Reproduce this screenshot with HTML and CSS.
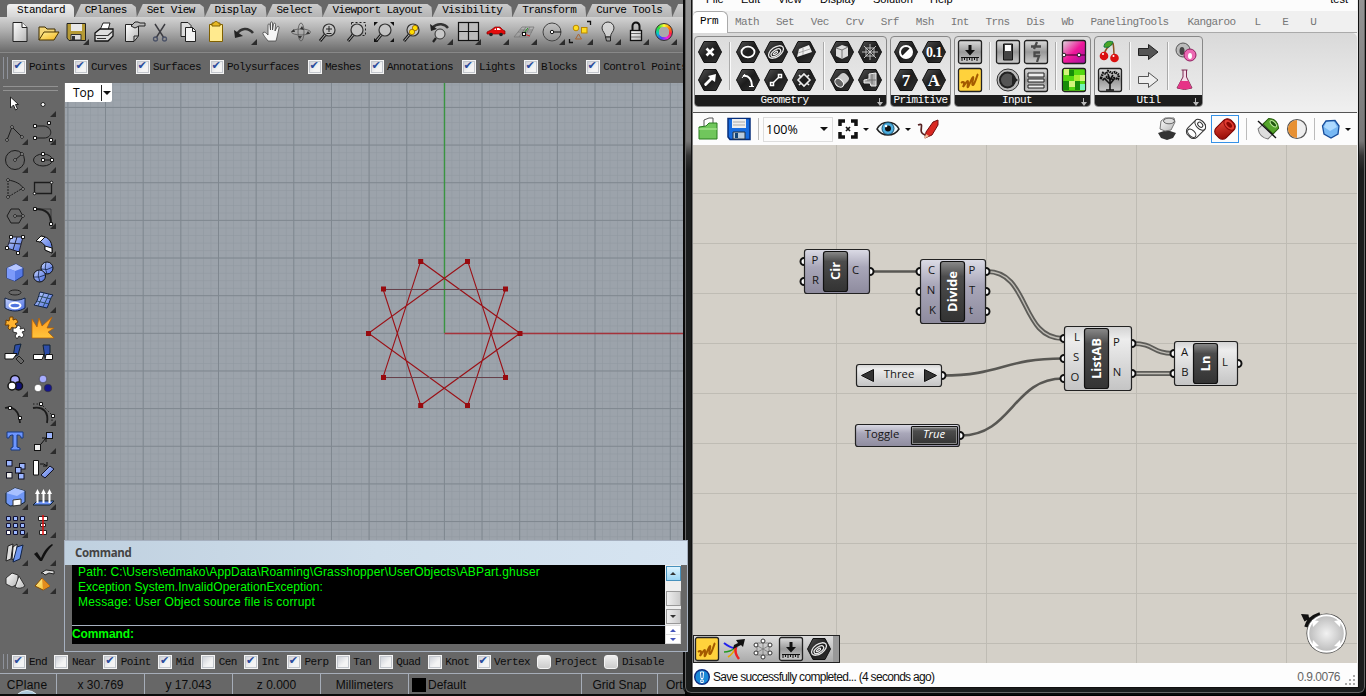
FILE: index.html
```html
<!DOCTYPE html>
<html lang="en">
<head>
<meta charset="utf-8">
<title>Modeler and graph editor</title>
<link rel="stylesheet" href="styles.css">
</head>
<body>
<svg class="defs" aria-hidden="true">
  <defs>
    <linearGradient id="gHex" x1="0" y1="0" x2="1" y2="1"><stop offset="0" stop-color="#555"/><stop offset=".5" stop-color="#1c1c1c"/><stop offset="1" stop-color="#333"/></linearGradient>
    <linearGradient id="gTile" x1="0" y1="0" x2="0" y2="1"><stop offset="0" stop-color="#ddd"/><stop offset=".5" stop-color="#999"/><stop offset="1" stop-color="#ccc"/></linearGradient>
    <linearGradient id="gBlue" x1="0" y1="0" x2="1" y2="1"><stop offset="0" stop-color="#c6d4ff"/><stop offset="1" stop-color="#4468dd"/></linearGradient>
    <linearGradient id="gMag" x1="0" y1="0" x2="1" y2="1"><stop offset="0" stop-color="#ddd"/><stop offset=".5" stop-color="#f0189a"/><stop offset="1" stop-color="#a010a0"/></linearGradient>
    <linearGradient id="gGold" x1="0" y1="0" x2="1" y2="1"><stop offset="0" stop-color="#fff09a"/><stop offset="1" stop-color="#f2b51c"/></linearGradient>
    <linearGradient id="gFire" x1="0" y1="0" x2="0" y2="1"><stop offset="0" stop-color="#ff9a1c"/><stop offset="1" stop-color="#ffc53d"/></linearGradient>
    <linearGradient id="gWhite" x1="0" y1="0" x2="1" y2="1"><stop offset="0" stop-color="#fff"/><stop offset="1" stop-color="#b5b5b5"/></linearGradient>
    <linearGradient id="gRed" x1="0" y1="0" x2="1" y2="1"><stop offset="0" stop-color="#f05040"/><stop offset="1" stop-color="#8e0500"/></linearGradient>
    <linearGradient id="gPurple" x1="0" y1="0" x2="0" y2="1"><stop offset="0" stop-color="#dcdce6"/><stop offset=".4" stop-color="#a9a7b9"/><stop offset="1" stop-color="#8e8b9e"/></linearGradient>
    <linearGradient id="gLight" x1="0" y1="0" x2="0" y2="1"><stop offset="0" stop-color="#d2d2d2"/><stop offset=".2" stop-color="#ededed"/><stop offset="1" stop-color="#c4c4c4"/></linearGradient>
    <linearGradient id="gDark" x1="0" y1="0" x2="0" y2="1"><stop offset="0" stop-color="#8a8a8a"/><stop offset=".25" stop-color="#4c4c4c"/><stop offset="1" stop-color="#333"/></linearGradient>
    <radialGradient id="gKnob"><stop offset="0" stop-color="#f2f2f2"/><stop offset="1" stop-color="#bcbcbc"/></radialGradient>
    <pattern id="minor" width="7.53" height="7.53" patternUnits="userSpaceOnUse" x="378.9" y="250"><path d="M.5 0V8M0 .5H8" stroke="#8f979f" stroke-width=".6"/></pattern>
    <pattern id="major" width="37.65" height="37.65" patternUnits="userSpaceOnUse" x="378.9" y="249.8"><path d="M.5 0V38M0 .5H38" stroke="#7f878f" stroke-width="1"/></pattern>
    <symbol id="hex" viewBox="0 0 28 28"><path d="M2.5 14 8 3.5H20L25.500 14 20 24.500H8Z" fill="url(#gHex)" stroke="#111" stroke-width="1"/></symbol>
    <symbol id="tile" viewBox="0 0 28 28"><rect x="2.500" y="2.500" width="23" height="23" rx="2" fill="url(#gTile)" stroke="#222" stroke-width="1.300"/></symbol>
    <symbol id="squiggle" viewBox="0 0 28 28"><rect x="2.500" y="2.500" width="23" height="23" rx="2" fill="#ffd23c" stroke="#222" stroke-width="1.300"/><path d="M5 17C8 15 9 16 7 21 10 17 12 13 12 16S11 22 12 21 16 11 17 11 15 20 17 19 21 9 22 8" fill="none" stroke="#a45a00" stroke-width="2"/></symbol>
    <symbol id="stamp" viewBox="0 0 28 28"><use href="#tile"/><path d="M12.500 7H15.500V12H19L14 17.500 9 12H12.500Z" fill="#111"/><path d="M5 19.500H23M6 20V23M8.500 20V22M11 20V23M13.500 20V22M16 20V23M18.500 20V22M21 20V23" stroke="#111" stroke-width="1"/></symbol>
    <symbol id="surfHex" viewBox="0 0 28 28"><use href="#hex"/><g transform="rotate(-35 14 14)" fill="none" stroke="#e8e8e8" stroke-width="1.300"><ellipse cx="14" cy="14" rx="8.500" ry="4.800"/><ellipse cx="13.500" cy="14.500" rx="5.500" ry="2.700"/><ellipse cx="13" cy="14.500" rx="2.500" ry="1"/></g></symbol>
    <symbol id="lens" viewBox="0 0 28 28"><path d="M11 17 6 23" stroke="#1c1c1c" stroke-width="3"/><path d="M11 17 6.500 22.500" stroke="#bbb" stroke-width="1"/><circle cx="15" cy="12" r="6" fill="#c9c9c9" fill-opacity=".8" stroke="#333" stroke-width="1.200"/></symbol>
  </defs>
</svg>

<div class="desktop">
  <main class="rhino">
    <nav class="rtabs"><span class="on">Standard</span><span>CPlanes</span><span>Set View</span><span>Display</span><span>Select</span><span>Viewport Layout</span><span>Visibility</span><span>Transform</span><span>Curve Tools</span><span></span></nav>
    <div class="rbar">
      <i><svg><path d="M7 4.500H16L21 9.500V23.500H7Z" fill="url(#gWhite)" stroke="#222"/><path d="M16 4.500V9.500H21" fill="#fff" stroke="#222"/></svg></i>
      <i><svg><path d="M5 22V9H11L13 11H21V14" fill="#f4d778" stroke="#3a2b00"/><path d="M5 22 10 14H25L20 22Z" fill="url(#gGold)" stroke="#4a3500"/></svg></i>
      <i class="more"><svg><path d="M5 5.500H23.500V22.500H7L5 20Z" fill="#b59a35" stroke="#222"/><path d="M9 6H20V13H9Z" fill="#e8e8e8"/><path d="M9 16.500H19V22H9Z" fill="#ddd" stroke="#333"/><path d="M10 18H13V22H10Z" fill="#333"/></svg></i>
      <i><svg><path d="M10 12 13 5H20L18 12" fill="#fff" stroke="#222"/><path d="M5 15 10 11H23V18L18 23H5Z" fill="#ddd" stroke="#111" stroke-width="1.300"/><path d="M5 17.500H18L23 13M7 20.500H16" stroke="#333" stroke-width="1.200" fill="none"/></svg></i>
      <i><svg><path d="M7.500 6.500H20.500V18L16 23.500H7.500Z" fill="url(#gWhite)" stroke="#222"/><path d="M16 23V18H20" fill="none" stroke="#222"/><path d="M13 8 17 4H20L22 5H27V8H21L17 10Z" fill="#bbb" stroke="#222"/></svg></i>
      <i><svg><path d="M9 6 18 20M19 6 10 20" stroke="#3b3b40" stroke-width="1.400"/><circle cx="9.500" cy="21" r="2" fill="none" stroke="#4c5368" stroke-width="1.300"/><circle cx="18.500" cy="21" r="2" fill="none" stroke="#4c5368" stroke-width="1.300"/></svg></i>
      <i><svg><path d="M7 4.500H14L17 7.500V18.500H7Z" fill="#ddd" stroke="#222"/><path d="M11.500 9.500H18.500L21.500 12.500V23.500H11.500Z" fill="#f3f3f3" stroke="#222"/><path d="M18.500 9.500V13.500H22" fill="none" stroke="#222"/></svg></i>
      <i><svg><path d="M7.500 6.500H20.500V23.500H7.500Z" fill="#ffea8e" stroke="#806000"/><path d="M10 8V5H12C12 3 16 3 16 5H18V8Z" fill="#e7b823" stroke="#806000"/></svg></i>
      <i class="more"><svg><path d="M7 16C11 10 18 9 23 15" fill="none" stroke="#333" stroke-width="2.600"/><path d="M4 12 5 20 13 18Z" fill="#222"/></svg></i>
      <i><svg><path d="M10 23C8 20 4 16 5 14.500 7 13.500 8 15 10 17V7C10 5.500 12 5.500 12 7L12.500 12V5C12.500 3.500 14.500 3.500 14.500 5V12L15.500 6C16 4.500 18 5 17.500 7L17 13 19 9C20 7.500 21.500 8.500 21 10L19 19 18 23Z" fill="#f5f5f5" stroke="#444" stroke-width=".8"/></svg></i>
      <i><svg><g fill="none" stroke="#555" stroke-width=".8"><ellipse cx="15" cy="14" rx="9.500" ry="3"/><ellipse cx="15" cy="14" rx="3" ry="9"/></g><path d="M9 14H5L8 11ZM16 8 18 12 14 11ZM22 13 24 16 20 16ZM12 18H16L14 21Z" fill="#333"/></svg></i>
      <i><svg><use href="#lens"/><path d="M12 11H18M15 8V14M12.500 15.500H17.500" stroke="#222"/></svg></i>
      <i><svg><rect x="9.500" y="4.500" width="14" height="13" fill="none" stroke="#222" stroke-dasharray="2 2"/><use href="#lens"/></svg></i>
      <i><svg><use href="#lens"/><path d="M4 4H8L4 8ZM24 4H20L24 8ZM24 24H20L24 20ZM4 24V20L8 24Z" fill="#111"/></svg></i>
      <i><svg><use href="#lens"/><circle cx="17" cy="10" r="2.700" fill="#fd0" stroke="#850" stroke-width=".7"/><circle cx="14" cy="14" r="2.700" fill="#fd0" stroke="#850" stroke-width=".7"/></svg></i>
      <i class="more"><svg><path d="M6 10C12 4 19 6 22 10" fill="none" stroke="#333" stroke-width="2.400"/><path d="M4 6 5 13 11 11Z" fill="#222"/><path d="M10 20 7 24" stroke="#222" stroke-width="2.200"/><circle cx="14" cy="16" r="5" fill="#c8c8c8" stroke="#333"/></svg></i>
      <i class="more"><svg><rect x="4.500" y="4.500" width="20" height="18" fill="#bcbcbc" stroke="#111" stroke-width="1.200"/><path d="M14.500 5V23M4 13.500H24" stroke="#111" stroke-width="1.200"/></svg></i>
      <i class="more"><svg><path d="M5 16V14L9 12 13 9H18L21 12 23 13V16Z" fill="#e30b0b" stroke="#800" stroke-width=".7"/><path d="M13 11 14 10V12H12ZM15 10H17L19 12H15Z" fill="#fff"/><circle cx="9" cy="16.500" r="1.800" fill="#222"/><circle cx="19" cy="16.500" r="1.800" fill="#222"/></svg></i>
      <i class="more"><svg><path d="M4 19 12 9H24L19 19ZM8 14H22M10 12H23M9 19 16 9M14 19 20 9" fill="none" stroke="#777" stroke-width=".8"/><path d="M14 16 20 18" stroke="#c22"/><path d="M14 15 18 10" stroke="#292"/><rect x="12.500" y="14.500" width="3" height="3" fill="#fff" stroke="#111"/></svg></i>
      <i class="more"><svg><circle cx="14" cy="14" r="9" fill="none" stroke="#444"/><path d="M14 14H23" stroke="#111"/><circle cx="14" cy="14" r="1.700" fill="#fff" stroke="#111"/></svg></i>
      <i class="more"><svg><path d="M21 3.500H24.500V7M3.500 21V24.500H7" fill="none" stroke="#111" stroke-width="1.300"/><circle cx="10" cy="10" r="2.800" fill="#fd2" stroke="#b80"/><rect x="15.500" y="9.500" width="5.500" height="5.500" fill="#fd2" stroke="#b80"/><path d="M9.500 21 12.500 16 15.500 21Z" fill="none" stroke="#a63"/></svg></i>
      <i class="more"><svg><path d="M11.500 19C11.500 15 8 13.500 8 10A6 6 0 0 1 20 10C20 13.500 16.500 15 16.500 19Z" fill="#ddd" fill-opacity=".75" stroke="#333"/><path d="M11.500 19H16.500V23H12.500Z" fill="#999" stroke="#222"/></svg></i>
      <i class="more"><svg><path d="M10.500 13V8A3.500 3.500 0 0 1 17.500 8V13" fill="none" stroke="#111" stroke-width="2"/><rect x="8.500" y="12.500" width="11" height="10" fill="url(#gWhite)" stroke="#111" stroke-width="1.300"/><path d="M9 15.500H19M9 19H19" stroke="#666"/></svg></i>
      <i class="more"><b class="wheel"></b></i>
    </div>
    <div class="filters"><label class="on">Points</label><label class="on">Curves</label><label class="on">Surfaces</label><label class="on">Polysurfaces</label><label class="on">Meshes</label><label class="on">Annotations</label><label class="on">Lights</label><label class="on">Blocks</label><label class="on">Control Points</label></div>
    <div class="work">
      <aside class="tools">
        <i><svg><path d="M9.500 7V18L12.500 15 14.500 20 16.500 19 14.500 14.500H17.500Z" fill="#fff" stroke="#222"/></svg></i>
        <i class="more"><svg><circle cx="14" cy="14.500" r="2" fill="#fff" stroke="#222"/></svg></i>
        <i class="more"><svg class="ln"><path d="M6 22 11 9 21 19"/><g class="d"><circle cx="6" cy="22" r="1.300"/><circle cx="11" cy="9" r="1.300"/><circle cx="21" cy="19" r="1.300"/></g></svg></i>
        <i class="more"><svg class="ln"><path d="M6 8H15C24 9 24 20 15 20H6"/><g class="d"><path d="M4.500 6.500h3v3h-3zM18.500 3.500h3v3h-3zM4.500 18.500h3v3h-3zM20.500 20.500h3v3h-3z"/></g></svg></i>
        <i class="more"><svg class="ln"><circle cx="14" cy="14" r="9.500"/><path d="M14 14 21 8"/><g class="d"><circle cx="14" cy="14" r="1.300"/><circle cx="21" cy="8" r="1.300"/></g></svg></i>
        <i class="more"><svg class="ln"><ellipse cx="14" cy="14" rx="9.500" ry="6"/><path d="M14 14H23"/><g class="d"><path d="M12.500 6.500h3v3h-3zM12.500 12.500h3v3h-3zM21.500 12.500h3v3h-3z"/></g></svg></i>
        <i class="more"><svg class="ln"><path d="M7 6C14 7 20 10 22 14"/><path d="M7 6V23L22 14" stroke-dasharray="2 1"/><g class="d"><circle cx="7" cy="6" r="1.300"/><circle cx="7" cy="23" r="1.300"/><circle cx="22" cy="15" r="1.300"/></g></svg></i>
        <i class="more"><svg class="ln"><path d="M5.500 8.500H22.500V19.500H5.500Z" stroke-width="1.300"/><g class="d"><circle cx="22.500" cy="8.500" r="1.300"/><circle cx="5.500" cy="19.500" r="1.300"/></g></svg></i>
        <i class="more"><svg class="ln"><path d="M6 14 10 7H18L22 14 18 21H10ZM14 14H22"/><g class="d"><circle cx="14" cy="14" r="1.300"/><circle cx="22" cy="14" r="1.300"/></g></svg></i>
        <i class="more"><svg class="ln"><path d="M6 7H22V22" stroke-width=".6"/><path d="M6 7C18 7 22 12 22 22" stroke-width="2"/><g class="d"><path d="M4.500 5.500h3v3h-3zM20.500 20.500h3v3h-3z"/></g></svg></i>
        <i class="more"><svg><path d="M10 7H22L18 22 6 18Z" fill="url(#gBlue)" stroke="#223"/><path d="M16 7 12 20M8 13 20 14" stroke="#223"/><g class="d"><path d="M8.500 5.500h3v3h-3zM20.500 5.500h3v3h-3zM4.500 16.500h3v3h-3zM15.500 21.500h3v3h-3z"/></g></svg></i>
        <i class="more"><svg><path d="M12 6C21 7 24 13 23 23L16 20C17 15 14 12 7 11Z" fill="url(#gBlue)" stroke="#111"/><path d="M12 6 16 7 11 12 7 11ZM16 16 23 18 23 23 16 20Z" fill="#fff" stroke="#111"/></svg></i>
        <i class="more"><svg><path d="M6 10 15 6 22 10V18L14 23 6 20Z" fill="#5579e6" stroke="#233a80"/><path d="M6 10 14 13 22 10 15 6Z" fill="#b6c6ff"/><path d="M14 13V23L6 20V10Z" fill="#7c9afa"/></svg></i>
        <i class="more"><svg><circle cx="18" cy="10" r="6" fill="url(#gBlue)" stroke="#111"/><circle cx="10.500" cy="18" r="6" fill="url(#gBlue)" stroke="#111"/><path d="M12 11Q18 13 24 9M17 4Q15 10 18 16M5 19Q10 20 16 17M10 12Q8 18 11 24" fill="none" stroke="#124" stroke-width=".8"/></svg></i>
        <i class="more"><svg><ellipse cx="14" cy="6.500" rx="6" ry="2.500" fill="none" stroke="#222"/><path d="M4 12C10 15 18 15 24 12V22C18 26 10 26 4 22Z" fill="url(#gBlue)" stroke="#124"/><ellipse cx="14" cy="19.500" rx="5.500" ry="2.800" fill="#4f74df" stroke="#fff" stroke-width="2"/></svg></i>
        <i class="more"><svg><path d="M11 6 24 9C21 12 21 16 18 22L5 19C9 15 9 11 11 6Z" fill="url(#gBlue)" stroke="#124"/><path d="M15 7 9 20M20 8 14 21M10 10 22 13M8 15 20 18" stroke="#245" stroke-width=".9"/></svg></i>
        <i><svg><path d="M5 6 8 7 9 3 12 3 12 6 15 5 17 8 14 10 16 12 14 15 11 13 9 16 7 14 8 11 4 11 5 9Z" fill="#ffb32f" stroke="#754000"/><path d="M12 14 15 14 17 11 20 13 19 15 23 14 24 17 21 18 23 21 21 24 18 22 16 25 14 22 16 19 12 18Z" fill="#fff" stroke="#333"/></svg></i>
        <i><svg><path d="M3 24 3 5 8 13 10 4 13 12 23 3 18 14 25 14 19 18 25 24Z" fill="url(#gFire)" stroke="#b66000" stroke-width=".7"/></svg></i>
        <i><svg><path d="M14 3 20 2 17 13 12 15Z" fill="#2d4da9" stroke="#123"/><path d="M4 11.500H16L12 17H4Z" fill="#fff" stroke="#111"/><path d="M18 14 23 19 20 22 15 17Z" fill="none" stroke="#222"/></svg></i>
        <i><svg><path d="M14 3H21V11L16 16Z" fill="#2d4da9" stroke="#123"/><path d="M4.500 12.500H15L13 17.500H4.500ZM17 12.500H23.500V17.500H16Z" fill="#fff" stroke="#111"/></svg></i>
        <i class="more"><svg><g stroke="#111" stroke-width="1.500"><circle cx="14" cy="10" r="4.500" fill="#aaf"/><circle cx="17.500" cy="16" r="4" fill="#117"/><circle cx="11" cy="16" r="4" fill="#fff"/></g></svg></i>
        <i><svg><circle cx="14" cy="9" r="3.800" fill="#a7adff" stroke="#333" stroke-width=".6"/><circle cx="9" cy="18" r="3.800" fill="#fff" stroke="#333" stroke-width=".6"/><circle cx="19" cy="18" r="3.800" fill="#15158a" stroke="#333" stroke-width=".6"/></svg></i>
        <i><svg class="ln"><path d="M4 9C12 7 18 11 19 24" stroke-width="1.800"/><g class="d"><path d="M7.500 7.500h3v3h-3zM17.500 17.500h3v3h-3z"/></g></svg></i>
        <i class="more"><svg class="ln"><path d="M4 9C14 7 20 13 18 24" stroke-width="1.800"/><path d="M4 5H12L23 16V24" stroke-dasharray="1.500 2"/><g class="d"><path d="M10.500 3.500h3v3h-3zM22.500 15.500h3v3h-3z"/></g></svg></i>
        <i><svg><path d="M6 5H22V11H20C20 8 18 8 16 8V20L19 21V23H10V21L12 20V8C9 8 8 9 8 11H6Z" fill="#6d96ff" stroke="#173881"/></svg></i>
        <i class="more"><svg><path d="M12 17 17 11M13 11H17V15" fill="none" stroke="#111"/><rect x="5.500" y="17.500" width="6" height="6" fill="#eee" stroke="#111"/><rect x="17.500" y="5.500" width="6" height="6" fill="#9db6ff" stroke="#111"/></svg></i>
        <i><svg><g fill="#9bb5ff" stroke="#112"><rect x="5.500" y="5.500" width="5.500" height="5.500"/><rect x="18.500" y="8.500" width="5.500" height="5.500"/><rect x="14.500" y="12.500" width="5.500" height="5.500"/><rect x="17.500" y="18.500" width="5.500" height="5.500"/><rect x="5.500" y="17.500" width="5.500" height="5.500" fill="#eee"/></g></svg></i>
        <i><svg><path d="M4.500 5.500H9.500V20H4.500Z" fill="#fff" stroke="#111"/><path d="M11 9Q15 8 18 11M18 7V11H14" fill="none" stroke="#111"/><path d="M12 20 21 11 25 14 16 23Z" fill="url(#gBlue)" stroke="#112"/></svg></i>
        <i class="more"><svg><path d="M5 10 14 5 24 8V19L19 22 9 23 5 20Z" fill="#6f96f5" stroke="#123"/><path d="M5 10 14 5 24 8 16 13Z" fill="#a8c0ff"/><path d="M12 17 20 16V22L12 23Z" fill="#fff" stroke="#333"/></svg></i>
        <i class="more"><svg><path d="M8 18H25L21 22H4Z" fill="#6a91f4" stroke="#123"/><path d="M8.500 20V9M14.500 20V9M20.500 20V9" stroke="#fff" stroke-width="2"/><path d="M6 11 8.500 6 11 11ZM12 11 14.500 6 17 11ZM18 11 20.500 6 23 11Z" fill="#fff"/></svg></i>
        <i class="more"><svg><g fill="#9bb8ff" stroke="#113"><path d="M5.500 5.500h4v4h-4zM12.500 5.500h4v4h-4zM19.500 5.500h4v4h-4zM5.500 12.500h4v4h-4zM12.500 12.500h4v4h-4zM19.500 12.500h4v4h-4zM12.500 19.500h4v4h-4zM19.500 19.500h4v4h-4z"/><path d="M5.500 19.500h4v4h-4z" fill="#fff"/></g></svg></i>
        <i class="more"><svg><path d="M9.500 5.500H18.500V9.500H9.500ZM11.500 12.500H16.500V15.500H11.500ZM10.500 19.500H17.500V23.500H10.500Z" fill="#fff" stroke="#222"/><path d="M14 4V24" stroke="#e20d0d" stroke-width="1.500"/></svg></i>
        <i class="more"><svg><path d="M7 7 12 5 10 20 5 22Z" fill="#ddd" stroke="#222"/><path d="M12 8 16 5V18L11 21Z" fill="#eee" stroke="#222"/><path d="M16 8 22 6 19 20 12 23Z" fill="#6d95ee" stroke="#124"/></svg></i>
        <i class="more"><svg><path d="M5 15 8 13 12 19C15 12 18 8 23 5L24 6C18 11 16 17 13 22H11Z" fill="#111"/></svg></i>
        <i class="more"><svg><path d="M5 11 11 6 17 8V17L11 20 5 17Z" fill="url(#gWhite)" stroke="#333"/><path d="M18 9 24 19Q19 23 14 20Z" fill="url(#gWhite)" stroke="#333"/></svg></i>
        <i class="more"><svg><path d="M6 19 13 11 21 19 14 23Z" fill="url(#gGold)" stroke="#844800"/><path d="M13 11 14 23 21 19Z" fill="#e18c20"/><path d="M12 6 17 3 25 4V7L20 6 16 8 14 6Z" fill="#ddd" stroke="#222"/></svg></i>
      </aside>
      <section class="view">
        <div class="vtitle"><span>Top</span><b></b></div>
        <svg class="scene" width="620" height="457">
          <rect width="620" height="457" fill="#9ca3ab"/><rect width="620" height="457" fill="url(#minor)"/><rect width="620" height="457" fill="url(#major)"/>
          <path d="M379.500 0V250" stroke="#3a9440" stroke-width="1.400"/><path d="M379.500 250.500H620" stroke="#a5333b" stroke-width="1.400"/>
          <g fill="none" stroke="#9b1016" stroke-width="1.100"><path d="M455 250.300 355.700 178.200 318 294.300M402.700 178.200 303.500 250.300 402.700 322.300M402.700 178.200 440.500 294.500M440.500 206 402.700 322.300M455 250.300 355.700 322.300 318 206"/><path d="M318 206.500H440.500M318 294.500H440.500" stroke="#66404a"/></g>
          <g fill="#980a0e"><path d="M452.500 248h5v5h-5zM438 203.500h5v5h-5zM400 176h5v5h-5zM353.200 176h5v5h-5zM316 203.500h5v5h-5zM301 248h5v5h-5zM316 292h5v5h-5zM353.200 320h5v5h-5zM400 320h5v5h-5zM438 292h5v5h-5z"/></g>
        </svg>
      </section>
    </div>
    <div class="filters snaps"><label class="on">End</label><label>Near</label><label class="on">Point</label><label class="on">Mid</label><label>Cen</label><label class="on">Int</label><label class="on">Perp</label><label>Tan</label><label>Quad</label><label>Knot</label><label class="on">Vertex</label><label class="soft">Project</label><label class="soft">Disable</label></div>
    <footer class="rstatus"><span class="s1">CPlane</span><span class="s2">x 30.769</span><span class="s2">y 17.043</span><span class="s2">z 0.000</span><span class="s2">Millimeters</span><span class="s3"><b></b>Default</span><span class="s4">Grid Snap</span><span class="s5">Ort</span></footer>
    <div class="orb"></div>
  </main>

  <section class="gh">
    <div class="ghbody">
      <div class="menu"><span>File</span><span>Edit</span><span>View</span><span>Display</span><span>Solution</span><span>Help</span><em>test</em></div>
      <nav class="gtabs"><span class="on">Prm</span><span>Math</span><span>Set</span><span>Vec</span><span>Crv</span><span>Srf</span><span>Msh</span><span>Int</span><span>Trns</span><span>Dis</span><span>Wb</span><span>PanelingTools</span><span class="w1">Kangaroo</span><span class="w1">L</span><span class="w2">E</span><span class="w2">U</span></nav>
      <div class="ribbon">
        <div class="group">
          <div class="cells">
            <div class="col"><svg><use href="#hex"/><path d="M10.500 10.500 17.500 17.500M17.500 10.500 10.500 17.500" stroke="#fff" stroke-width="2.600"/></svg><svg><use href="#hex"/><path d="M9 20 8 18 14 12 12 10 20 8 19 16 16 14 10 20Z" fill="#fff"/></svg></div><hr>
            <div class="col"><svg><use href="#hex"/><ellipse cx="14" cy="14" rx="6.500" ry="5.300" fill="none" stroke="#fff" stroke-width="1.800"/></svg><svg><use href="#hex"/><path d="M9 10C15 9 18 14 18 20" fill="none" stroke="#fff" stroke-width="2"/><path d="M8 12 11 8M15 20.500H20" stroke="#fff"/></svg></div>
            <div class="col"><svg><use href="#surfHex"/></svg><svg><use href="#hex"/><path d="M10 18 18 10" stroke="#fff" stroke-width="1.500"/><path d="M8.500 16.500h3v3h-3zM16.500 8.500h3v3h-3z" fill="#222" stroke="#fff" stroke-width="1.500"/></svg></div>
            <div class="col"><svg><use href="#hex"/><path d="M9 11 19 7 22 14 7 19Z" fill="#eee"/><path d="M13 10 13 17M8 15 20 11" stroke="#999" stroke-width=".8"/></svg><svg><use href="#hex"/><path d="M14 8 20 14 14 20 8 14ZM9 9 11 11M19 9 17 11M9 19 11 17M19 19 17 17" fill="none" stroke="#eee" stroke-width="1.600"/></svg></div><hr>
            <div class="col"><svg><use href="#hex"/><path d="M8 10 14 7 20 9V18L14 21 8 18Z" fill="#ddd"/><path d="M8 10 14 12V21M14 12 20 9" stroke="#777" fill="none"/></svg><svg><use href="#hex"/><g transform="rotate(45 14 14)"><rect x="9" y="7" width="10" height="14" rx="4" fill="#ccc"/><ellipse cx="14" cy="18" rx="5" ry="3.500" fill="#666" stroke="#fff"/></g></svg></div>
            <div class="col"><svg><use href="#hex"/><path d="M8 8 20 20M20 8 8 20M14 6V22M6 14H22M10 10H18V18H10Z" stroke="#ccc" stroke-width=".9" fill="none"/></svg><svg><use href="#hex"/><path d="M13 8 20 7V20L15 20 14 17 8 17 8 14 13 13Z" fill="#aaa" stroke="#eee"/><path d="M16 8V18M11 14 20 14" stroke="#666" stroke-width=".8"/></svg></div>
          </div><h3>Geometry<b></b></h3>
        </div>
        <div class="group">
          <div class="cells">
            <div class="col"><svg><use href="#hex"/><circle cx="14" cy="14" r="6" fill="none" stroke="#fff" stroke-width="2"/><path d="M18.500 9.500A6 6 0 0 1 9.500 18.500Z" fill="#fff"/></svg><svg><use href="#hex"/><text x="14" y="20" class="hx">7</text></svg></div>
            <div class="col"><svg><use href="#hex"/><text x="14" y="19" class="hx sm">0.1</text></svg><svg><use href="#hex"/><text x="14" y="20" class="hx">A</text></svg></div>
          </div><h3>Primitive</h3>
        </div>
        <div class="group">
          <div class="cells">
            <div class="col"><svg><use href="#stamp"/></svg><svg><use href="#squiggle"/></svg></div><hr>
            <div class="col"><svg><use href="#tile"/><path d="M9.500 6H18.500V22H9.500Z" fill="#444" stroke="#111"/><path d="M11 7H17V13H11Z" fill="#fff"/></svg><svg><circle cx="14" cy="14" r="11" fill="#bbb" stroke="#333"/><circle cx="13.500" cy="14" r="7.500" fill="#555" stroke="#222" stroke-width="2"/><path d="M18 9 24 14 18 19Z" fill="#222"/></svg></div>
            <div class="col"><svg><use href="#tile"/><path d="M9 8.500H19M15 4 12 11M18 14.500H12.500V18L17 18 15 24" fill="none" stroke="#4a4a4a" stroke-width="2.300"/></svg><svg><use href="#tile"/><path d="M6 7H22V11H6ZM6 13H22V16H6ZM6 19H22V22H6Z" fill="#eee" stroke="#222"/></svg></div><hr>
            <div class="col"><svg><rect x="2.500" y="2.500" width="23" height="23" rx="2" fill="url(#gMag)" stroke="#222" stroke-width="1.300"/><path d="M3 17H25" stroke="#302"/><circle cx="4" cy="17" r="1.800" fill="#fff" stroke="#222"/><circle cx="19" cy="17" r="1.800" fill="#fff" stroke="#222"/></svg><svg><rect x="2.500" y="2.500" width="23" height="23" rx="2" fill="#54d810" stroke="#222" stroke-width="1.300"/><path d="M4 3h5v6h-5zM9 15h6v6h-6zM20 9h5v6h-5z" fill="#d3f57a"/><path d="M9 4h5v6h-5zM15 15h5v9h-5zM3 15h6v9h-6z" fill="#178c08"/><path d="M14 9h6v6h-6z" fill="#a9ee30"/><path d="M20 18h5v6h-5z" fill="#75f5b8"/></svg></div>
          </div><h3>Input<b></b></h3>
        </div>
        <div class="group">
          <div class="cells">
            <div class="col"><svg><path d="M8 17C9 12 12 8 17 5M18 20C18 14 18 10 17 5" fill="none" stroke="#852" stroke-width="1.500"/><path d="M8 9C8 4 13 2 17 4 15 9 12 10 8 9Z" fill="#4ba526" stroke="#174"/><circle cx="8" cy="18" r="4.300" fill="#db1010"/><circle cx="18.500" cy="20" r="4.300" fill="#db1010"/><circle cx="7" cy="16" r="1" fill="#fff"/><circle cx="17.500" cy="18" r="1" fill="#fff"/></svg><svg><use href="#tile"/><path d="M14 24V14M14 18 9 13M14 18 19 12M14 14 12 8M14 14 17 9M10 24H18" stroke="#111" stroke-width="1.600"/><path d="M5 12 7 7 10 8 12 5 16 7 19 6 23 9 22 13 18 12 15 14 11 11 8 14Z" fill="none" stroke="#111" stroke-width="2.400" stroke-dasharray="1.500 .8"/></svg></div><hr>
            <div class="col"><svg><path d="M4.500 10.500H14.500V6.500L24 14 14.500 21.500V17.500H4.500Z" fill="#555" stroke="#222"/></svg><svg><path d="M4.500 10.500H14.500V6.500L24 14 14.500 21.500V17.500H4.500Z" fill="#eee" stroke="#555"/></svg></div><hr>
            <div class="col"><svg><circle cx="11" cy="12" r="7" fill="#bbb" stroke="#555"/><ellipse cx="10" cy="13" rx="2.500" ry="4" fill="#444"/><circle cx="18" cy="17" r="6" fill="#ec69b3" stroke="#902060"/><ellipse cx="18" cy="18" rx="2" ry="3" fill="#fff"/></svg><svg><path d="M9.500 4H15.500M11 4V11L5 22Q12.500 25 20 22L14.500 11V4" fill="#f5dbe8" stroke="#7d2850"/><path d="M8.500 15H16.500L19.500 22Q12.500 24.500 5.500 22Z" fill="#e63386"/></svg></div>
          </div><h3>Util<b></b></h3>
        </div>
      </div>
      <div class="gbar">
        <svg class="g1"><path d="M9 12V5L14 3H18V12" fill="#fff" stroke="#555"/><path d="M4 24V12L11 11 14 8H22V24Z" fill="#70c65c" stroke="#287c1f"/><path d="M4 14H22" stroke="#baf09f"/></svg>
        <svg class="g2"><path d="M3 3.500H25V24.500H5L3 22Z" fill="#176ce0" stroke="#062e7b" stroke-width="1.500"/><path d="M7 4H21V13H7Z" fill="#eee"/><path d="M8 7H20M8 10H20" stroke="#aaa"/><path d="M8 17H20V24H8Z" fill="#bcd" stroke="#234"/><path d="M10 18H13V23H10Z" fill="#147"/></svg>
        <hr>
        <div class="zoom">100%<b></b></div>
        <svg class="g3"><path d="M6 11V6H11M17 6H22V11M22 17V22H17M11 22H6V17" fill="none" stroke="#111" stroke-width="3.500"/><path d="M12 12 16 16M16 12 12 16" stroke="#111" stroke-width="1.700"/></svg><b class="dd"></b>
        <svg class="g4"><path d="M3 14C8 5 20 5 25 14 20 22 8 22 3 14Z" fill="#edfaff" stroke="#222" stroke-width="1.500"/><circle cx="14" cy="13.500" r="6" fill="#4caee0" stroke="#16506f"/><circle cx="14" cy="13.500" r="3" fill="#111"/><circle cx="12" cy="11" r="1.300" fill="#fff"/></svg><b class="dd"></b>
        <svg class="g5"><path d="M3 10C10 7 4 15 7 18S10 18 11 22" fill="none" stroke="#522" stroke-width="1.700"/><path d="M11 17 18 7 23 5 23 10 17 20 10 23Z" fill="#d92922" stroke="#701010"/><path d="M11 19 14 21 9 24Z" fill="#f5c29d"/></svg>
        <div class="disp">
          <span><svg><path d="M5 18 14 15 23 18 20 23 14 25 8 23Z" fill="#333"/><path d="M8 6 12 3H21L22 7 18 15 12 16 7 14Z" fill="url(#gWhite)" stroke="#777"/><ellipse cx="16" cy="6" rx="5.500" ry="2.800" fill="#ddd" stroke="#666"/></svg></span>
          <span><svg><g transform="rotate(45 14 14)" fill="#fff" stroke="#333"><rect x="7.500" y="4" width="13" height="20" rx="5"/><ellipse cx="14" cy="8" rx="6.500" ry="4"/><ellipse cx="14" cy="8" rx="3" ry="2"/><ellipse cx="14" cy="20" rx="5" ry="3"/></g></svg></span>
          <span class="sel"><svg><g transform="rotate(45 14 14)"><rect x="7" y="3.500" width="14" height="21" rx="5" fill="url(#gRed)" stroke="#700"/><ellipse cx="14" cy="8" rx="6.500" ry="4" fill="#e33d32" stroke="#8c0808"/><ellipse cx="14" cy="8" rx="3.500" ry="2" fill="#8a0803"/></g></svg></span><hr>
          <span><svg><g transform="rotate(45 14 14)"><path d="M7 13H21V21Q14 26 7 21Z" fill="#ddd" stroke="#777"/><path d="M7 6Q14 0 21 6V14H7Z" fill="#55a52b" stroke="#285e0e"/><ellipse cx="14" cy="6.500" rx="4" ry="2" fill="#205810" stroke="#bde99b"/></g><path d="M4 6 22 23" stroke="#111" stroke-width="1.400"/></svg></span>
          <span><svg><circle cx="14" cy="14" r="9.500" fill="#eee" stroke="#555" stroke-width="1.200"/><path d="M14 5A9 9 0 0 0 14 23Z" fill="#e79032"/></svg></span><hr>
          <span><svg><path d="M9 6 18 5.500 22 11 21 19 14 23 7 19 5.500 11Z" fill="#78b8f3" stroke="#174d9b" stroke-width="1.300"/><path d="M9.500 7 17 6.500 20 12 13 16 7 12Z" fill="#aedaff"/></svg></span><b class="dd"></b>
        </div>
      </div>
      <div class="canvas">
        <svg class="graph" viewBox="693 145 664 518" width="664" height="518">
          <rect x="693" y="145" width="664" height="518" fill="#d4d0c8"/>
          <path d="M836.500 145V663M986.500 145V663M1136.500 145V663M1286.500 145V663M693 193.500H1357M693 243.500H1357M693 293.500H1357M693 343.500H1357M693 393.500H1357M693 443.500H1357M693 493.500H1357M693 543.500H1357M693 593.500H1357M693 643.500H1357" stroke="#bfbcb4"/>
          <g fill="none"><g stroke="#585753" stroke-width="2.600"><path d="M871 271.500H919M942 375.500C1002 375.500 1003 358.500 1063 358.500M961 435.500C1012 435.500 1013 378.500 1063 378.500"/></g>
          <g stroke="#5d5c58" stroke-width="5"><path d="M987 271.500C1030 271.500 1020 338.500 1063 338.500"/><path d="M1133 343.500C1155 343.500 1152 353.500 1173 353.500M1133 373.500H1173"/></g><g stroke="#bfbcb5" stroke-width="1.300"><path d="M987 271.500C1030 271.500 1020 338.500 1063 338.500M1133 343.500C1155 343.500 1152 353.500 1173 353.500M1133 373.500H1173"/></g></g>
          <g fill="#fff" stroke="#111" stroke-width="2"><circle cx="804" cy="261.500" r="3.500"/><circle cx="804" cy="281.500" r="3.500"/><circle cx="870" cy="271.500" r="3.500"/><circle cx="920" cy="271.500" r="3.500"/><circle cx="920" cy="291.500" r="3.500"/><circle cx="920" cy="311.500" r="3.500"/><circle cx="986" cy="271.500" r="3.500"/><circle cx="986" cy="291.500" r="3.500"/><circle cx="986" cy="311.500" r="3.500"/><circle cx="942" cy="375.500" r="3.500"/><circle cx="960" cy="435.500" r="3.500"/><circle cx="1064" cy="338.500" r="3.500"/><circle cx="1064" cy="358.500" r="3.500"/><circle cx="1064" cy="378.500" r="3.500"/><circle cx="1132" cy="343.500" r="3.500"/><circle cx="1132" cy="373.500" r="3.500"/><circle cx="1174" cy="353.500" r="3.500"/><circle cx="1174" cy="373.500" r="3.500"/><circle cx="1238" cy="363.500" r="3.500"/></g>
          <g stroke="#222" stroke-width="1.200"><g fill="url(#gPurple)"><rect x="804.500" y="249.500" width="65" height="44" rx="2.500"/><rect x="920.500" y="259.500" width="65" height="64" rx="2.500"/><rect x="855.500" y="424.500" width="104" height="22" rx="2.500"/></g>
          <g fill="url(#gLight)"><rect x="1064.500" y="326.500" width="67" height="64" rx="2.500"/><rect x="1174.500" y="341.500" width="63" height="44" rx="2.500"/><rect x="856.500" y="364.500" width="85" height="22" rx="2.500"/></g>
          <g fill="url(#gDark)" stroke="#111"><rect x="823.500" y="251.500" width="24" height="40" rx="2.500"/><rect x="940.500" y="261.500" width="24" height="60" rx="2.500"/><rect x="1084.500" y="328.500" width="24" height="60" rx="2.500"/><rect x="1193.500" y="343.500" width="24" height="40" rx="2.500"/><rect x="911.500" y="426.500" width="46" height="18" rx="1"/></g></g>
          <rect x="912.500" y="427.500" width="44" height="16" fill="none" stroke="#aaa" stroke-width=".7"/>
          <path d="M873.500 369.500V381.500L861.500 375.500ZM924.500 369.500V381.500L936.500 375.500Z" fill="#333" stroke="#111"/>
          <g class="nt"><text x="815" y="264">P</text><text x="815.500" y="284">R</text><text x="855.500" y="274">C</text><text x="931.500" y="274">C</text><text x="931" y="294">N</text><text x="932.500" y="314">K</text><text x="972" y="274">P</text><text x="972" y="294">T</text><text x="971" y="314">t</text><text x="1077" y="341">L</text><text x="1076" y="361">S</text><text x="1075" y="381">O</text><text x="1116.500" y="346">P</text><text x="1117" y="376">N</text><text x="1184.500" y="356">A</text><text x="1185" y="376">B</text><text x="1225" y="366">L</text><text x="899" y="378">Three</text><text x="882" y="438">Toggle</text><text x="934" y="438" class="it">True</text></g>
          <g class="nb"><text transform="translate(840 271) rotate(-90)">Cir</text><text transform="translate(957 291.500) rotate(-90)">Divide</text><text transform="translate(1101 358.500) rotate(-90)">ListAB</text><text transform="translate(1210 363.500) rotate(-90)">Ln</text></g>
          <path d="M1301 614 1308.500 614.500 1309 619 1304.500 621.500Z" fill="#111"/><path d="M1306 627Q1308 618 1320 614M1307 618 1311 621" fill="none" stroke="#111" stroke-width="3.500"/><circle cx="1326.500" cy="633.500" r="20" fill="#444"/><circle cx="1326.500" cy="633.500" r="18.300" fill="url(#gKnob)" stroke="#fff" stroke-width="2"/><path d="M1312 620 1319 621 1313 627ZM1341 620 1334 621 1340 627ZM1312 647 1319 646 1313 640ZM1341 647 1334 646 1340 640Z" fill="#fff"/>
        </svg>
        <div class="widgets"><svg><use href="#squiggle"/></svg><svg><path d="M3 8Q12 15 16 12" stroke="#22e" stroke-width="2" fill="none"/><path d="M3 17Q9 17 14 13" stroke="#292" stroke-width="1.600" fill="none"/><path d="M7 22Q12 19 15 12" stroke="#e8a500" stroke-width="1.600" fill="none"/><path d="M18 24Q13 18 15 12" stroke="#e22" stroke-width="2.500" fill="none"/><path d="M12 14 13 10 17 8 15 5 24 4 22 12 20 10Z" fill="#111"/></svg><svg><path d="M14 6V22M7 10 21 18M7 18 21 10M8 8V20L20 20V8Z" fill="none" stroke="#777" stroke-width=".8"/><g fill="#fff" stroke="#333"><circle cx="14" cy="6" r="2"/><circle cx="21" cy="10" r="2"/><circle cx="21" cy="18" r="2"/><circle cx="14" cy="22" r="2"/><circle cx="7" cy="18" r="2"/><circle cx="7" cy="10" r="2"/></g></svg><svg><use href="#stamp"/></svg><svg><use href="#surfHex"/></svg></div>
      </div>
      <footer class="gstatus"><svg width="16" height="16"><circle cx="8" cy="8" r="7.300" fill="#1989d8" stroke="#0c2c80" stroke-width="1.400"/><path d="M6.500 3H9.500L9 9.500H7ZM6.800 11H9.200V13.500H6.800Z" fill="#1265b5" stroke="#fff"/></svg><span>Save successfully completed... (4 seconds ago)</span><em>0.9.0076</em><svg width="11" height="11"><path d="M8 0h2v2h-2zM4 4h2v2h-2zM8 4h2v2h-2zM0 8h2v2h-2zM4 8h2v2h-2zM8 8h2v2h-2z" fill="#aaa"/></svg></footer>
    </div>
  </section>

  <section class="command">
    <h2>Command</h2>
    <div class="cmd">
      <div class="log"><p>Path: C:\Users\edmako\AppData\Roaming\Grasshopper\UserObjects\ABPart.ghuser</p><p class="tight">Exception System.InvalidOperationException:</p><p>Message: User Object source file is corrupt</p></div>
      <div class="prompt">Command:</div>
      <div class="scroll"><b class="up"></b><b class="thumb"></b><b class="down"></b></div>
      <div class="spin"><b class="up"></b><b class="down"></b></div>
    </div>
  </section>
</div>
</body>
</html>
```
FILE: styles.css
```css
* { box-sizing: border-box; }
body { margin: 0; overflow: hidden; background: #000; font: 12px "Liberation Sans", Arial, sans-serif; }
i, em { font-style: normal; }
hr { border: 0; margin: 0; }
svg { display: block; width: 28px; height: 28px; flex: none; overflow: visible; }
.defs { position: absolute; width: 0; height: 0; }
.desktop { position: relative; width: 1366px; height: 696px; overflow: hidden; }

/* modeler window */
.rhino { width: 685px; height: 696px; background: #676767; display: flex; flex-direction: column; overflow: hidden; position: relative; border-bottom: 2px solid #0b0b0b; }
.rtabs, .filters, .gtabs, .group h3 { font-family: "Liberation Mono", monospace; font-size: 11px; letter-spacing: -.6px; white-space: nowrap; }
.rtabs { height: 17px; padding: 4px 0 0 7px; display: flex; flex: none; color: #000; }
.rtabs span { flex: none; height: 13px; line-height: 13px; padding: 0 10px 0 9.900px; background: linear-gradient(#cbcbcb, #b4b4b4); clip-path: polygon(6px 0, calc(100% - 5px) 0, calc(100% - 1px) 3px, 100% 100%, 0 100%); }
.rtabs .on { background: linear-gradient(#f0f0f0, #d6d6d6); clip-path: none; border-radius: 3px 5px 0 0; padding-right: 9px; margin-right: 1px; }
.rbar { height: 36px; flex: none; padding-left: 6px; padding-top: 1px; display: flex; background: linear-gradient(#d3d3d3, #adadad 40%, #6b6b6b); border-bottom: 1px solid #888; }
.rbar i, .tools i { position: relative; display: block; width: 28px; height: 28px; flex: none; }
.more::after { content: ""; position: absolute; right: 1px; bottom: 1px; border-left: 6px solid transparent; border-bottom: 6px solid #2c2c2c; }
.wheel { display: block; width: 18px; height: 18px; margin: 5px; border-radius: 50%; border: 1px solid #333; background: radial-gradient(circle, #aaa 5px, transparent 5.500px), conic-gradient(#ff3, #f80, #f24, #e2e, #44f, #0cc, #3d3, #ff3); }
.filters { height: 30px; flex: none; padding-left: 11.500px; padding-bottom: 2px; display: flex; align-items: center; color: #0c0c0c; position: relative; }
.filters::before { content: ""; position: absolute; left: 3px; top: 4px; bottom: 4px; width: 3px; border: solid #8e929b; border-width: 0 1px; }
.filters label { display: flex; align-items: center; flex: none; margin-right: 8.500px; height: 14px; line-height: 14px; }
.filters label::before { content: ""; width: 12px; height: 12px; margin-right: 3.500px; background: linear-gradient(135deg, #c8ccd4, #f4f4f4 60%); border: 1px solid #f4f4f4; box-shadow: inset 0 0 0 1px #c2c6cc; }
.filters .on::before { content: "✔"; font: 11px/10px "DejaVu Sans", sans-serif; letter-spacing: 0; color: #2c4c9c; text-align: center; text-indent: -1px; }
.filters .soft::before { border-radius: 3px; background: linear-gradient(#eee, #ccc); box-shadow: none; }
.work { height: 567px; flex: none; display: flex; }
.tools { width: 65px; padding: 7px 0 0 1px; display: grid; grid-template-columns: 28px 28px; grid-auto-rows: 28.060px; align-content: start; position: relative; border-right: 1px solid #777; }
.tools::before { content: ""; position: absolute; left: 3px; top: 3px; width: 55px; height: 3px; border: solid #929292; border-width: 1px 0; }
.ln { fill: none; stroke: #1c1c1c; }
.d { fill: #fff; stroke: #111; stroke-width: 1; }
.view { position: relative; width: 620px; height: 457px; }
.scene { width: 620px; height: 457px; }
.vtitle { position: absolute; left: 0; top: 0; width: 47px; height: 19px; background: #fff; display: flex; font: 12px/19px "Open Sans", sans-serif; border-radius: 0 0 2px 0; }
.vtitle span { width: 37px; padding-left: 8px; border-right: 1px solid #222; height: 16px; margin-top: 2px; line-height: 15px; }
.vtitle b { border: 4px solid transparent; border-top-color: #111; margin: 8px 0 0 1px; height: 0; }
.snaps { height: 24px; padding-bottom: 0; border-bottom: 1px solid #a6adb8; }
.snaps label { margin-right: 7.400px; }
.rstatus { height: 20px; flex: none; display: flex; line-height: 22px; color: #0c0c0c; white-space: nowrap; overflow: hidden; }
.rstatus span { border-right: 1px solid #a6adb8; text-align: center; flex: none; }
.rstatus .s1 { width: 57px; padding-right: 2px; letter-spacing: .2px; }
.s2 { width: 88px; }
.rstatus .s3 { width: 173px; text-align: left; display: flex; padding-left: 3px; }
.s3 b { width: 14px; height: 14px; background: #000; margin: 4px 2px 0 0; }
.s4 { width: 76px; }
.rstatus .s5 { padding-left: 8px; border: 0; }
.orb { position: absolute; left: 13px; top: 690px; width: 28px; height: 28px; border-radius: 50%; background: #a9c6d8; border: 1px solid #dceaf2; }

/* floating command window */
.command { position: absolute; left: 64px; top: 540px; width: 624px; height: 112px; background: #676767; border: 1px solid #a6b0bf; }
.command h2 { margin: 0; height: 24px; background: linear-gradient(90deg, #bfd0df, #cfdeeb 50%, #d6e4f1); font: bold 11.500px/23px "Open Sans", sans-serif; padding-left: 10px; color: #444; letter-spacing: -.35px; }
.cmd { margin-left: 7px; width: 609px; display: grid; grid-template-columns: 593px 16px; grid-template-rows: 60px 19px; }
.log { background: #000; color: #0f0; padding-left: 6px; overflow: hidden; grid-column: 1; grid-row: 1; }
.log p { margin: 0; height: 15px; line-height: 15px; white-space: nowrap; letter-spacing: .175px; }
.log .tight { letter-spacing: .05px; }
.prompt { background: #000; color: #0f0; border-top: 1px solid #a6b0bf; font-weight: bold; line-height: 17px; grid-row: 2; letter-spacing: -.1px; }
.scroll { background: #eee; grid-column: 2; grid-row: 1; display: flex; flex-direction: column; align-items: center; }
.spin { background: #ddd; grid-column: 2; grid-row: 2; display: flex; flex-direction: column; gap: 1px; padding: 1px; }
.scroll b { width: 15px; height: 15px; border: 1px solid #999; background: linear-gradient(90deg, #eee, #ccc); display: grid; place-items: center; flex: none; }
.scroll .up { background: linear-gradient(#def4ff, #9bd6f5); border-color: #4691bd; margin-top: 1px; }
.scroll .thumb { margin-top: 10px; }
.scroll .down { margin-top: 3px; }
.spin b { flex: 1; background: #fff; display: grid; place-items: center; }
.scroll .up::after, .spin .up::after { content: ""; border: 3px solid transparent; border-bottom: 3px solid #333; margin-top: -3px; }
.scroll .down::after, .spin .down::after { content: ""; border: 3px solid transparent; border-top: 3px solid #333; margin-bottom: -3px; }
.spin .up::after { border-bottom-color: #45b; }
.spin .down::after { border-top-color: #45b; }

/* graph editor window */
.gh { position: absolute; left: 684px; top: -10px; width: 682px; height: 704px; padding: 10px 8px 7px 8px; background: linear-gradient(#969696, #777 150px, #333 165px, #1b1d1d 180px); border: 1px solid #0a0a0a; border-radius: 0 0 7px 7px; box-shadow: inset 0 0 0 1px #666, 0 0 0 1px #090909; }
.ghbody { width: 666px; height: 687px; margin-top: -1px; margin-left: -1px; outline: 1px solid #111; background: #f4f4f4; border-left: 1px solid #777; border-right: 1px solid #eee; overflow: hidden; display: flex; flex-direction: column; }
.menu { height: 11px; display: flex; gap: 14px; padding-left: 13px; font-size: 11px; line-height: 11px; background: #fcfcfc; flex: none; white-space: nowrap; }
.menu span, .menu em { margin-top: -6px; }
.menu span:nth-child(1) { width: 21px; }
.menu span:nth-child(2) { width: 23px; }
.menu span:nth-child(3) { width: 28px; }
.menu span:nth-child(4) { width: 39px; }
.menu span:nth-child(5) { width: 43px; }
.menu em { margin-left: auto; margin-right: 9px; }
.gtabs { height: 22px; flex: none; display: flex; gap: 16.950px; background: #f0f0f0; color: #777; line-height: 23px; border-bottom: 1px solid #aaa; }
.gtabs .on { width: 35px; height: 22px; margin-right: -10px; padding-left: 7px; background: #fff; color: #000; line-height: 19px; border: 1px solid #aaa; border-bottom: 0; border-left: 0; border-radius: 5px 6px 0 0; }
.gtabs .w1 { margin-left: 2px; }
.gtabs .w2 { margin-left: 5px; }
.ribbon { height: 80px; flex: none; display: flex; gap: 3px; padding: 3px 0 6px 1px; background: linear-gradient(#d9d9d9, #f0f0f0); border-bottom: 1px solid #555; border-radius: 0 5px 0 0; }
.group { height: 71px; border: 1px solid #888; border-radius: 4px; padding: 1px 2.500px 0 .5px; background: linear-gradient(#dcdcdc, #ececec); overflow: hidden; }
.cells { display: flex; height: 57px; }
.col { width: 28px; }
.cells hr { width: 10px; border-left: 1px solid #aaa; margin-left: 5px; margin-right: -5px; height: 48px; margin-top: 4px; box-shadow: inset 1px 0 #fafafa; }
.group h3 { margin: 0 -3px 0 -1px; height: 12px; line-height: 11px; background: #1d1d1d; color: #fff; font-weight: normal; text-align: center; position: relative; }
.group:first-child h3 { padding-right: 12px; }
.group:nth-child(3) h3 { padding-right: 11px; }
.group h3 b { position: absolute; right: 4px; bottom: 1px; border: 3px solid transparent; border-top: 4px solid #bbb; border-bottom: 0; }
.group h3 b::before { content: ""; position: absolute; left: -1px; top: -8px; width: 1px; height: 5px; background: #bbb; }
.hx { font: bold 17px "Liberation Serif", serif; fill: #fff; text-anchor: middle; }
.hx.sm { font-size: 14px; letter-spacing: -.5px; }
.gbar { height: 32px; flex: none; background: #fcfcfc; display: flex; align-items: center; padding-left: 2px; }
.g2 { margin-left: 2px; }
.gbar hr { width: 1px; height: 22px; background: #bbb; margin-left: 5px; }
.zoom { width: 70px; height: 25px; margin-left: 4px; border: 1px solid #ddd; font: 12.500px/23px "Open Sans", sans-serif; padding-left: 2px; display: flex; justify-content: space-between; align-items: center; }
.zoom b, .dd { border: 4px solid transparent; border-top-color: #111; border-bottom: 0; margin-right: 4px; }
.dd { border-width: 3px 3px 0; margin-right: 0; }
.g3 { margin: 0 1px; }
.g4 { margin: 0 3px 0 5px; }
.g5 { margin-left: 4px; }
.disp { margin-left: auto; margin-right: 6px; display: flex; align-items: center; }
.disp span { width: 29px; display: flex; justify-content: center; }
.disp .sel { width: 28px; height: 28px; outline: 1px solid #3591e6; outline-offset: -1px; }
.disp hr { margin: 0 6.500px 0 7.500px; }
.disp hr:nth-of-type(2) { margin: 0 1.500px 0 2px; }
.canvas { height: 518px; flex: none; position: relative; }
.graph { width: 664px; height: 518px; }
.nt { font: 11.300px "Open Sans", sans-serif; fill: #161616; text-anchor: middle; }
.nt .it { fill: #fff; font-style: italic; }
.nb { font: bold 13px "Open Sans", sans-serif; fill: #fff; text-anchor: middle; }
.widgets { position: absolute; left: 0; top: 490px; width: 147px; height: 28px; border: 1px solid #222; background: linear-gradient(#ddd, #aaa); display: flex; box-shadow: inset -6px 0 #999; }
.widgets svg { margin-top: -1px; }
.widgets svg:first-child { margin-left: -1px; }
.gstatus { height: 24px; flex: none; background: #fdfdfd; display: flex; align-items: center; padding: 3px 1px 0 1px; color: #111; }
.gstatus svg { width: 16px; height: 16px; }
.gstatus span { margin-left: 3px; letter-spacing: -.7px; }
.gstatus em { margin-left: auto; margin-right: 5px; color: #666; letter-spacing: -.5px; }
.gstatus svg:last-child { width: 11px; height: 11px; align-self: flex-end; margin-bottom: 1px; }
```
